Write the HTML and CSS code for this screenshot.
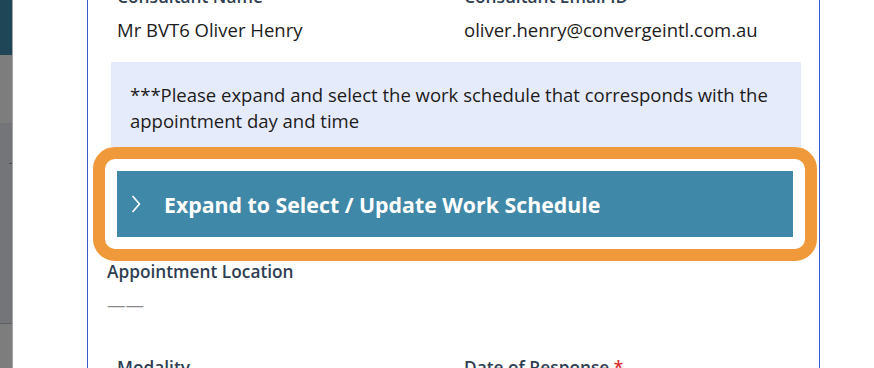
FILE: index.html
```html
<!DOCTYPE html>
<html lang="en">
<head>
  <meta charset="UTF-8">
  <meta name="viewport" content="width=device-width, initial-scale=1.0">
  <title>Appointment Details</title>
  <link rel="stylesheet" href="styles.css">
</head>
<body>
  <div class="sidebar">
    <div class="side-top"></div>
    <div class="side-a"></div>
    <div class="side-b"><span class="tick"></span></div>
    <div class="side-c"></div>
  </div>
  <div class="main">
    <div class="panel">
      <div class="fields">
        <div class="field">
          <div class="label">Consultant Name</div>
          <div class="value">Mr BVT6 Oliver Henry</div>
        </div>
        <div class="field">
          <div class="label">Consultant Email ID</div>
          <div class="value">oliver.henry@convergeintl.com.au</div>
        </div>
      </div>

      <div class="notice">***Please expand and select the work schedule that corresponds with the appointment day and time</div>

      <div class="highlight">
        <div class="accordion">
          <svg class="chevron" width="10" height="18" viewBox="0 0 10 18">
            <polyline points="1.5,1 8.5,9 1.5,17" fill="none" stroke="#fff" stroke-width="1.6"/>
          </svg>
          <span class="accordion-title">Expand to Select / Update Work Schedule</span>
        </div>
      </div>

      <div class="location">
        <div class="label">Appointment Location</div>
        <div class="empty">——</div>
      </div>

      <div class="fields lower">
        <div class="field">
          <div class="label">Modality</div>
        </div>
        <div class="field">
          <div class="label">Date of Response <span class="req">*</span></div>
        </div>
      </div>
    </div>
  </div>
</body>
</html>
```

FILE: styles.css
```css
body {
  margin: 0;
  font-family: "Open Sans", "Noto Sans", sans-serif;
  display: flex;
  height: 368px;
  overflow: hidden;
  background-color: #fff;
}
.sidebar {
  width: 12px;
  border-right: 1px solid #a3a3a3;
  display: flex;
  flex-direction: column;
  flex-shrink: 0;
}
.side-top {
  height: 55px;
  background-color: #1f4657;
}
.side-a {
  height: 68px;
  background-color: #7d7d7d;
}
.side-b {
  height: 200px;
  background-color: #747579;
  border-bottom: 1px solid #5f6064;
  position: relative;
}
.tick {
  position: absolute;
  top: 40px;
  right: 0;
  width: 3px;
  height: 1px;
  background-color: #4a4b4e;
}
.side-c {
  flex: 1;
  background-color: #7d7d7d;
}
.main {
  flex: 1;
  padding-left: 74px;
}
.panel {
  display: flow-root;
  width: 731px;
  height: 100%;
  border-left: 1px solid #3b5bd3;
  border-right: 1px solid #3b5bd3;
}
.fields {
  display: grid;
  grid-template-columns: 347px 1fr;
  padding-left: 29px;
  margin-top: -14px;
}
.label {
  font-size: 17.3px;
  font-weight: 600;
  line-height: 22px;
  color: #2f3e52;
}
.value {
  margin-top: 10px;
  font-size: 18.5px;
  line-height: 24px;
  color: #1c1c1c;
}
.notice {
  margin: 20px 0 0 23px;
  width: 652px;
  padding: 20px 19px 13px;
  background-color: #e6ebfb;
  font-size: 18.5px;
  line-height: 26px;
  color: #1c1c1c;
}
.highlight {
  margin-left: 5px;
  width: 676px;
  padding: 12px;
  border: 12px solid #f0993a;
  border-radius: 22px;
}
.accordion {
  height: 66px;
  background-color: #3f88a8;
  display: flex;
  align-items: center;
  padding-left: 14px;
}
.chevron {
  margin-right: 23px;
}
.accordion-title {
  color: #fff;
  font-size: 21.3px;
  font-weight: 700;
}
.location {
  padding-left: 19px;
}
.empty {
  margin-top: 10px;
  font-size: 18.5px;
  line-height: 24px;
  color: #8a8a8a;
}
.lower {
  margin-top: 40px;
}
.req {
  color: #d62b2b;
}
```
